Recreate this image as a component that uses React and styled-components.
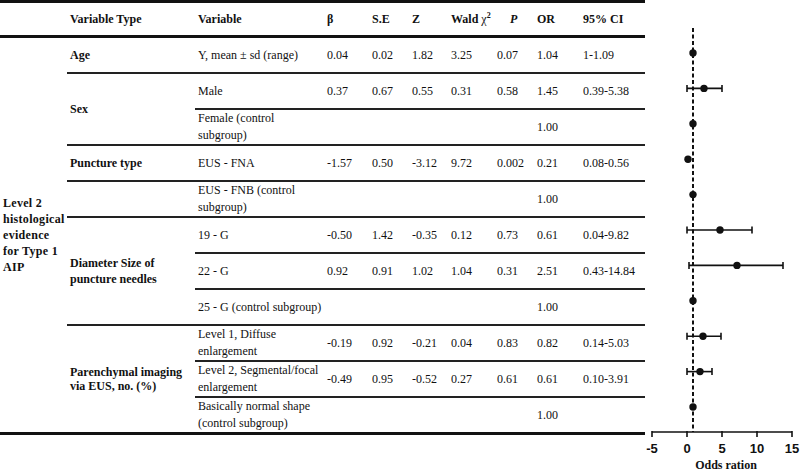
import React from 'react';
import styled, { createGlobalStyle } from 'styled-components';

const GlobalStyle = createGlobalStyle`
  html, body {
    margin: 0;
    padding: 0;
    background: #fff;
  }
  body {
    font-family: "Liberation Serif", "Times New Roman", serif;
    color: #111;
  }
`;

const Page = styled.div`
  display: flex;
  align-items: flex-start;
  width: 800px;
  height: 471px;
  overflow: hidden;
`;

const Table = styled.div`
  display: grid;
  grid-template-columns: 67px 128px 129px 45px 40px 39px 46px 40px 46px 65px;
  grid-template-rows: 35px repeat(10, 36px) 34px;
  width: 645px;
  flex-shrink: 0;
  border-top: 3px solid #111;
  border-bottom: 3px solid #111;
  font-size: 12px;
`;

const lineFor = (line) => {
  if (line === 'thick') return '3px solid #111';
  if (line === 'none') return '0';
  return '2px solid #222';
};

const Cell = styled.div`
  display: flex;
  flex-direction: column;
  justify-content: center;
  box-sizing: border-box;
  padding-left: ${(p) => p.$pad ?? 3}px;
  grid-row: span ${(p) => p.$span || 1};
  border-bottom: ${(p) => lineFor(p.$line)};
  font-weight: ${(p) => (p.$bold ? 700 : 400)};
  line-height: ${(p) => p.$lh || 17}px;
  letter-spacing: ${(p) => p.$ls || 0}px;
  white-space: nowrap;
`;

const Italic = styled.i`
  font-style: italic;
`;

const Chi = styled.span`
  margin-left: 3px;
  font-weight: 400;
`;

const Sup = styled.sup`
  font-size: 8px;
  font-weight: 700;
  line-height: 0;
`;

const PlotWrap = styled.div`
  width: 155px;
  height: 471px;
  flex-shrink: 0;
`;

const rows = [
  { type: 'Age', span: 1, v: 'Y, mean ± sd (range)', vals: ['0.04', '0.02', '1.82', '3.25', '0.07', '1.04', '1-1.09'] },
  { type: 'Sex', span: 2, v: 'Male', vals: ['0.37', '0.67', '0.55', '0.31', '0.58', '1.45', '0.39-5.38'] },
  { v: ['Female (control', 'subgroup)'], vals: ['', '', '', '', '', '1.00', ''] },
  { type: 'Puncture type', span: 1, v: 'EUS - FNA', vals: ['-1.57', '0.50', '-3.12', '9.72', '0.002', '0.21', '0.08-0.56'] },
  { type: '', span: 1, v: ['EUS - FNB (control', 'subgroup)'], vals: ['', '', '', '', '', '1.00', ''] },
  { type: ['Diameter Size of', 'puncture needles'], span: 3, lh: 16, v: '19 - G', vals: ['-0.50', '1.42', '-0.35', '0.12', '0.73', '0.61', '0.04-9.82'] },
  { v: '22 - G', vals: ['0.92', '0.91', '1.02', '1.04', '0.31', '2.51', '0.43-14.84'] },
  { v: '25 - G (control subgroup)', vals: ['', '', '', '', '', '1.00', ''] },
  { type: ['Parenchymal imaging', 'via EUS, no. (%)'], span: 3, lh: 14, typeLast: true, v: ['Level 1, Diffuse', 'enlargement'], vals: ['-0.19', '0.92', '-0.21', '0.04', '0.83', '0.82', '0.14-5.03'] },
  { v: ['Level 2, Segmental/focal', 'enlargement'], vals: ['-0.49', '0.95', '-0.52', '0.27', '0.61', '0.61', '0.10-3.91'] },
  { v: ['Basically normal shape', '(control subgroup)'], vals: ['', '', '', '', '', '1.00', ''], last: true },
];

const Lines = ({ text }) =>
  Array.isArray(text) ? text.map((t, i) => <span key={i}>{t}</span>) : text;

// forest plot: x in svg pixels (0 at 42, 7px per unit)
const points = [
  { x: 48 },
  { x: 59, lo: 42, hi: 77 },
  { x: 48 },
  { x: 43 },
  { x: 48 },
  { x: 75, lo: 42, hi: 107 },
  { x: 92, lo: 44, hi: 138 },
  { x: 48 },
  { x: 58, lo: 42, hi: 76 },
  { x: 55, lo: 42, hi: 67 },
  { x: 48 },
];

const ticks = [
  { x: 7, label: '-5' },
  { x: 42, label: '0' },
  { x: 77, label: '5' },
  { x: 112, label: '10' },
  { x: 147, label: '15' },
];

const ForestPlot = () => (
  <svg width="155" height="471" viewBox="0 0 155 471">
    <line x1="48" y1="28" x2="48" y2="432" stroke="#111" strokeWidth="2" strokeDasharray="4 2.5" />
    {points.map((p, i) => {
      const y = 53 + i * 35.4;
      return (
        <g key={i} stroke="#111" strokeWidth="1.6">
          {p.lo !== undefined && (
            <>
              <line x1={p.lo} y1={y} x2={p.hi} y2={y} />
              <line x1={p.lo} y1={y - 3.5} x2={p.lo} y2={y + 3.5} />
              <line x1={p.hi} y1={y - 3.5} x2={p.hi} y2={y + 3.5} />
            </>
          )}
          <circle cx={p.x} cy={y} r="3.7" fill="#111" stroke="none" />
        </g>
      );
    })}
    <line x1="7" y1="432" x2="147" y2="432" stroke="#111" strokeWidth="1.6" />
    {ticks.map((t) => (
      <g key={t.label}>
        <line x1={t.x} y1="431" x2={t.x} y2="437" stroke="#111" strokeWidth="1.6" />
        <text
          x={t.x}
          y="453"
          textAnchor="middle"
          fontFamily='"Liberation Sans", Arial, sans-serif'
          fontWeight="700"
          fontSize="13"
          fill="#111"
        >
          {t.label}
        </text>
      </g>
    ))}
    <text
      x="81"
      y="469"
      textAnchor="middle"
      fontFamily='"Liberation Serif", "Times New Roman", serif'
      fontWeight="700"
      fontSize="12"
      fill="#111"
    >
      Odds ration
    </text>
  </svg>
);

const App = () => (
  <>
    <GlobalStyle />
    <Page>
      <Table>
        <Cell $line="thick" />
        <Cell $line="thick" $bold>Variable Type</Cell>
        <Cell $line="thick" $bold>Variable</Cell>
        <Cell $line="thick" $bold>β</Cell>
        <Cell $line="thick" $bold>S.E</Cell>
        <Cell $line="thick" $bold>Z</Cell>
        <Cell $line="thick" $bold>
          <span>
            Wald<Chi>χ</Chi>
            <Sup>2</Sup>
          </span>
        </Cell>
        <Cell $line="thick" $bold $pad={16}>
          <Italic>P</Italic>
        </Cell>
        <Cell $line="thick" $bold>OR</Cell>
        <Cell $line="thick" $bold>95% CI</Cell>

        {rows.map((r, i) => (
          <React.Fragment key={i}>
            {i === 0 && (
              <Cell $span={11} $line="none" $bold $lh={16} $ls={0.3}>
                <Lines text={['Level 2', 'histological', 'evidence', 'for Type 1', 'AIP']} />
              </Cell>
            )}
            {r.type !== undefined && (
              <Cell $span={r.span} $bold $lh={r.lh} $line={r.typeLast ? 'none' : 'thin'}>
                <Lines text={r.type} />
              </Cell>
            )}
            <Cell $line={r.last ? 'none' : 'thin'}>
              <Lines text={r.v} />
            </Cell>
            {r.vals.map((val, j) => (
              <Cell key={j} $line={r.last ? 'none' : 'thin'}>
                {val}
              </Cell>
            ))}
          </React.Fragment>
        ))}
      </Table>
      <PlotWrap>
        <ForestPlot />
      </PlotWrap>
    </Page>
  </>
);

export default App;
